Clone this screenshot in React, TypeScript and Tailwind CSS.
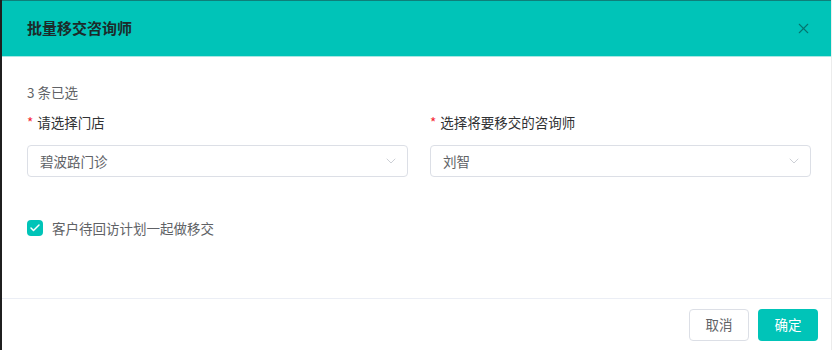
import { ChevronDown, X, Check } from "lucide-react";

const font = { fontFamily: '"Noto Sans CJK SC", "Noto Sans", sans-serif' };

function Select({ value }: { value: string }) {
  return (
    <div className="flex h-8 items-center justify-between rounded border border-[#dcdfe6] bg-white pl-3 pr-2">
      <span className="text-[13.5px] text-[#606266]">{value}</span>
      <ChevronDown size={16} strokeWidth={1.2} className="text-[#c0c4cc]" />
    </div>
  );
}

export default function App() {
  return (
    <div className="h-[350px] w-[832px] overflow-hidden bg-white" style={font}>
      <div className="flex h-full border-l-2 border-[#1f1f1f]">
        <div className="flex flex-1 flex-col border-r border-[#ececec]">
          <div className="flex h-[57px] items-center justify-between border-t border-[#0e7f7a] border-b border-b-[#a8e8e3] bg-[#00c4b8] pl-[25px] pr-[19px]">
            <span className="text-[15px] font-bold text-[#1c2b2a]">批量移交咨询师</span>
            <X size={17} strokeWidth={1.5} className="text-[#05756f]" />
          </div>
          <div className="flex-1 pl-[25px] pr-[20px] pt-[25px]">
            <div className="text-[13.5px] leading-5 text-[#606266]">3 条已选</div>
            <div className="mt-[10px] grid grid-cols-2 gap-[22px]">
              <div>
                <div className="text-[13.5px] leading-5 text-[#303133]">
                  <span className="mr-1 text-[#f5222d]">*</span>请选择门店
                </div>
                <div className="mt-[13px]">
                  <Select value="碧波路门诊" />
                </div>
              </div>
              <div>
                <div className="text-[13.5px] leading-5 text-[#303133]">
                  <span className="mr-1 text-[#f5222d]">*</span>选择将要移交的咨询师
                </div>
                <div className="mt-[13px]">
                  <Select value="刘智" />
                </div>
              </div>
            </div>
            <div className="mt-[41px] flex items-center gap-[9px]">
              <div className="flex h-4 w-4 items-center justify-center rounded-sm bg-[#00c4b8]">
                <Check size={12} strokeWidth={3} className="text-white" />
              </div>
              <span className="text-[13.5px] text-[#606266]">客户待回访计划一起做移交</span>
            </div>
          </div>
          <div className="flex h-[52px] items-center justify-end gap-[9px] border-t border-[#ebeef5] pr-[13px]">
            <button className="h-8 w-[60px] rounded border border-[#dcdfe6] bg-white text-[13.5px] text-[#606266]">取消</button>
            <button className="h-8 w-[60px] rounded bg-[#00c4b8] text-[13.5px] text-white">确定</button>
          </div>
        </div>
      </div>
    </div>
  );
}
